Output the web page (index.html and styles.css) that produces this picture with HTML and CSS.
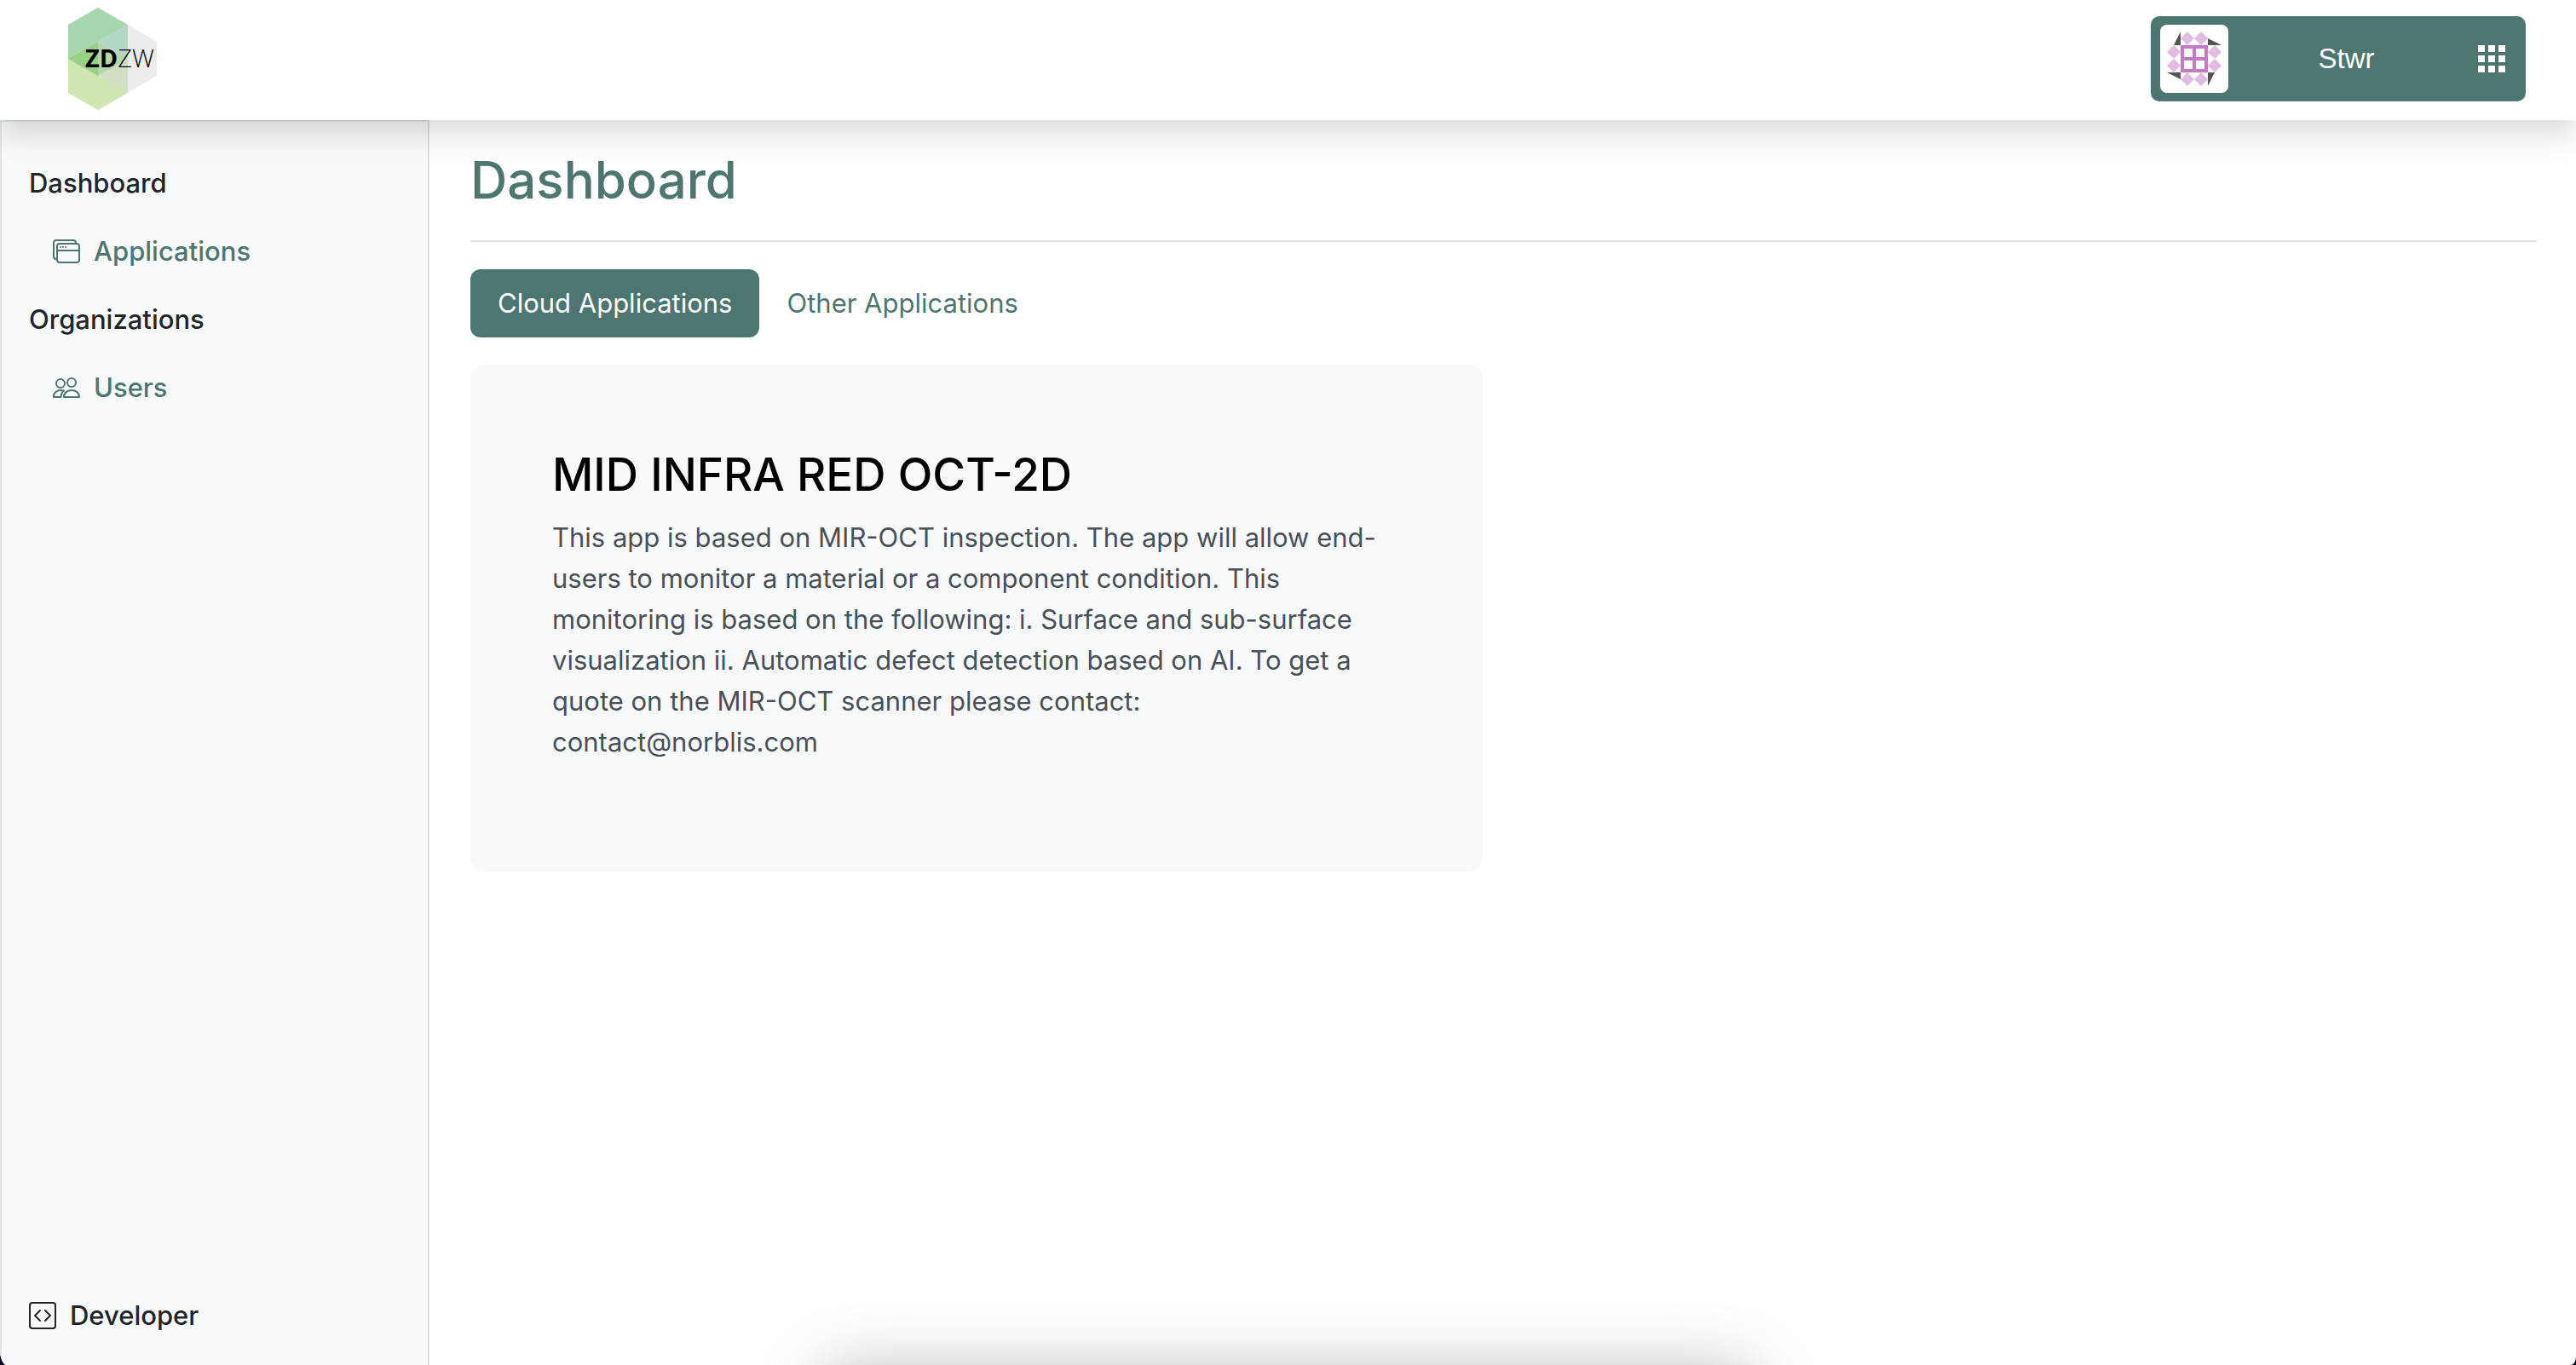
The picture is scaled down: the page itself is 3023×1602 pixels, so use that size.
FILE: index.html
```
<!DOCTYPE html>
<html lang="en">
<head>
<meta charset="utf-8">
<title>Dashboard</title>
<link rel="stylesheet" href="styles.css">
</head>
<body>
<div class="app">
  <header class="topbar">
    <a class="brand" href="#" aria-label="ZDZW">
      <svg class="brand-logo" viewBox="0 0 108 120" role="img" aria-hidden="true">
        <polygon fill="#a6d7ae" points="0,20 35,0 70,20 70,60 35,80 0,60"/>
        <polygon fill="#d0e6b0" points="0,60 35,40 70,60 70,100 35,120 0,100"/>
        <polygon fill="#ececec" points="35,40 70,20 104,40 104,80 70,100 35,80"/>
        <polygon fill="#9ad085" points="0,60 35,40 35,80"/>
        <polygon fill="#b3d7c5" points="35,40 70,20 70,60"/>
        <polygon fill="#d3dfc4" points="35,80 70,60 70,100"/>
        <polygon fill="#b6d6ac" points="35,40 70,60 35,80"/>
        <text class="brand-text" x="20" y="70"><tspan class="brand-strong">ZD</tspan><tspan class="brand-light">ZW</tspan></text>
      </svg>
    </a>
    <button class="account" type="button">
      <svg class="avatar" viewBox="0 0 80 80" aria-hidden="true">
        <rect width="80" height="80" fill="#fff"/>
        <g fill="#555">
          <path d="M24 8v16h-8zM56 16l16 8H56zM56 56h8l-8 16zM8 56h16v8z"/>
        </g>
        <g fill="#e1bbe0">
          <path d="M32 8l8 8-8 8-8-8zM48 8l8 8-8 8-8-8zM32 56l8 8-8 8-8-8zM48 56l8 8-8 8-8-8zM16 24l8 8-8 8-8-8zM16 40l8 8-8 8-8-8zM64 24l8 8-8 8-8-8zM64 40l8 8-8 8-8-8z"/>
        </g>
        <path fill="#c57ac4" fill-rule="evenodd" d="M24 24h32v32H24zM28 28v10h10V28zM42 28v10h10V28zM28 42v10h10V42zM42 42v10h10V42z"/>
      </svg>
      <span class="account-name">Stwr</span>
      <svg class="apps" viewBox="0 0 24 24" aria-hidden="true"><path fill="currentColor" d="M4 8h4V4H4zm6 12h4v-4h-4zm-6 0h4v-4H4zm0-6h4v-4H4zm6 0h4v-4h-4zm6-10v4h4V4zm-6 4h4V4h-4zm6 6h4v-4h-4zm0 6h4v-4h-4z"/></svg>
    </button>
  </header>

  <div class="body">
    <nav class="sidebar" aria-label="Main">
      <div class="nav-group">
        <span class="nav-title">Dashboard</span>
        <a class="nav-link" href="#">
          <svg class="icon" viewBox="0 0 16 16" fill="currentColor" aria-hidden="true"><path d="M4.500 6a.5.5 0 1 0 0-1 .5.5 0 0 0 0 1M6 6a.5.5 0 1 0 0-1 .5.5 0 0 0 0 1m2-.5a.5.5 0 1 1-1 0 .5.5 0 0 1 1 0"/><path d="M12 1a2 2 0 0 1 2 2 2 2 0 0 1 2 2v8a2 2 0 0 1-2 2H4a2 2 0 0 1-2-2 2 2 0 0 1-2-2V3a2 2 0 0 1 2-2zM2 12V5a2 2 0 0 1 2-2h9a1 1 0 0 0-1-1H2a1 1 0 0 0-1 1v8a1 1 0 0 0 1 1m1-4v5a1 1 0 0 0 1 1h10a1 1 0 0 0 1-1V8zm12-1V5a1 1 0 0 0-1-1H4a1 1 0 0 0-1 1v2z"/></svg>
          Applications
        </a>
        <span class="nav-title">Organizations</span>
        <a class="nav-link" href="#">
          <svg class="icon" viewBox="0 0 32 32" fill="none" stroke="currentColor" stroke-width="2" stroke-linejoin="round" aria-hidden="true"><circle cx="9" cy="11" r="5"/><circle cx="22" cy="10" r="5"/><path d="M13 19.500C6 18 1 21 1 26v1h8.500C9.500 24 10.500 21.500 13 19.500z"/><path d="M13 27C13 22 17 19 22 19s9 3 9 8z"/></svg>
          Users
        </a>
      </div>
      <a class="nav-title nav-dev" href="#">
        <svg class="icon" viewBox="0 0 16 16" fill="currentColor" aria-hidden="true"><path d="M14 1a1 1 0 0 1 1 1v12a1 1 0 0 1-1 1H2a1 1 0 0 1-1-1V2a1 1 0 0 1 1-1zM2 0a2 2 0 0 0-2 2v12a2 2 0 0 0 2 2h12a2 2 0 0 0 2-2V2a2 2 0 0 0-2-2z"/><path d="M6.854 4.646a.5.5 0 0 1 0 .708L4.207 8l2.647 2.646a.5.5 0 0 1-.708.708l-3-3a.5.5 0 0 1 0-.708l3-3a.5.5 0 0 1 .708 0m2.292 0a.5.5 0 0 0 0 .708L11.793 8l-2.647 2.646a.5.5 0 0 0 .708.708l3-3a.5.5 0 0 0 0-.708l-3-3a.5.5 0 0 0-.708 0"/></svg>
        Developer
      </a>
    </nav>

    <main class="content">
      <h1 class="page-title">Dashboard</h1>
      <div class="tabs" role="tablist">
        <button class="tab tab-active" type="button" role="tab" aria-selected="true">Cloud Applications</button>
        <button class="tab" type="button" role="tab" aria-selected="false">Other Applications</button>
      </div>
      <div class="cards">
        <article class="card">
          <h2 class="card-title">MID INFRA RED OCT-2D</h2>
          <p class="card-text">This app is based on MIR-OCT inspection. The app will allow end-users to monitor a material or a component condition. This monitoring is based on the following: i. Surface and sub-surface visualization ii. Automatic defect detection based on AI. To get a quote on the MIR-OCT scanner please contact: contact@norblis.com</p>
        </article>
      </div>
    </main>
  </div>
  <div class="dock-shadow"></div>
</div>
</body>
</html>
```
FILE: styles.css
```
* {
  box-sizing: border-box;
}

html {
  background: #0b0524;
}

body {
  margin: 0;
  font-family: Inter, "Liberation Sans", sans-serif;
  font-size: 31px;
  line-height: 48px;
  color: #212529;
}

.app {
  position: relative;
  display: flex;
  flex-direction: column;
  min-height: 100vh;
  overflow: hidden;
  background: #fff;
  border-bottom-left-radius: 8px 18px;
  border-bottom-right-radius: 6px 10px;
}

/* Top bar */
.topbar {
  position: relative;
  z-index: 1;
  display: flex;
  align-items: center;
  justify-content: space-between;
  padding: 9px 59px 12px 80px;
  background: #fff;
  box-shadow: 0 16px 32px rgba(0, 0, 0, 0.15);
}

.brand {
  display: flex;
}

.brand-logo {
  width: 108px;
  height: 120px;
}

.brand-text {
  font-family: "Open Sans", sans-serif;
  font-size: 29px;
  fill: #000;
}

.brand-strong {
  font-weight: 700;
}

.brand-light {
  font-weight: 300;
}

.account {
  display: flex;
  align-items: center;
  width: 440px;
  padding: 10px 16px 10px 11px;
  border: 0;
  border-radius: 10px;
  background: #4d7670;
  color: #fff;
  font: 33px/48px "Liberation Sans", sans-serif;
  cursor: pointer;
}

.avatar {
  width: 80px;
  height: 80px;
  border-radius: 8px;
}

.account-name {
  flex: 1;
  text-align: center;
}

.apps {
  width: 48px;
  height: 48px;
  margin-left: 8px;
}

/* Page body */
.body {
  display: flex;
  flex: 1;
}

.sidebar {
  display: flex;
  flex-direction: column;
  justify-content: space-between;
  flex: 0 0 504px;
  padding: 32px 32px 18px;
  border: 2px solid #dee2e6;
  border-bottom: 0;
  background: #f8f9fb;
  font-weight: 500;
}

.nav-group {
  display: flex;
  flex-direction: column;
}

.nav-title,
.nav-link {
  display: flex;
  align-items: center;
  gap: 16px;
  padding: 16px 0;
  color: #212529;
  text-decoration: none;
}

.nav-link {
  padding-left: 28px;
  color: #4d7670;
}

.icon {
  width: 32px;
  height: 32px;
}

.content {
  flex: 1;
  padding: 32px 46px 32px 48px;
}

.page-title {
  margin: 0 0 32px;
  padding-bottom: 32px;
  border-bottom: 2px solid #dee2e6;
  color: #4d7670;
  font-size: 60px;
  line-height: 77px;
  font-weight: 500;
}

.tabs {
  display: flex;
  margin-bottom: 32px;
}

.tab {
  padding: 16px 32px;
  border: 0;
  border-radius: 12px;
  background: none;
  color: #4d7670;
  font: inherit;
  cursor: pointer;
}

.tab-active {
  background: #4d7670;
  color: #fff;
}

.cards {
  display: grid;
  grid-template-columns: repeat(2, 1fr);
  gap: 50px;
}

.card {
  padding: 96px;
  border-radius: 16px;
  background: #f8f9fb;
}

.card-title {
  margin: 0 0 16px;
  color: #000;
  font-size: 53px;
  line-height: 67px;
  font-weight: 500;
}

.card-text {
  margin: 0 0 32px;
  color: #495057;
}

.dock-shadow {
  position: absolute;
  left: 32%;
  right: 32%;
  bottom: -130px;
  height: 120px;
  border-radius: 20px;
  box-shadow: 0 0 80px rgba(0, 0, 0, 0.3);
}
```
